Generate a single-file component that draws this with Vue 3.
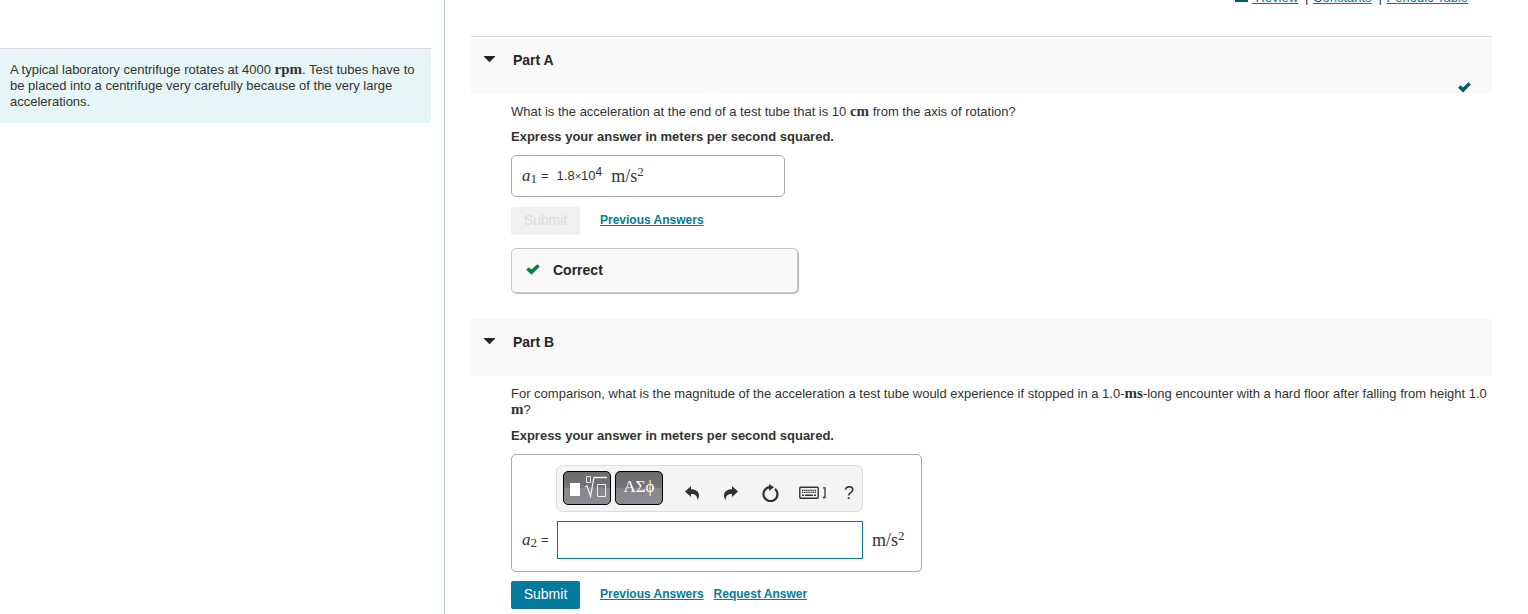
<template>
  <div class="page">
    <aside class="problem-pane">
      <p class="problem-text">
        A typical laboratory centrifuge rotates at 4000 <span class="unit">rpm</span>. Test tubes have to
        be placed into a centrifuge very carefully because of the very large accelerations.
      </p>
    </aside>

    <main class="parts-pane">
      <nav class="resources">
        <a href="#review" class="review">
          <svg width="13" height="12" viewBox="0 0 13 12"><path d="M0 1h6v8H0zM7 1h6v8H7zM0 9h13v3H0z" /></svg><span>&nbsp;Review</span>
        </a>
        <span class="divider">|</span>
        <a href="#constants">Constants</a>
        <span class="divider">|</span>
        <a href="#periodic-table">Periodic Table</a>
      </nav>

      <section class="part">
        <header class="part-header first">
          <button type="button" class="toggle" :aria-expanded="openA" @click="openA = !openA">
            <svg class="caret" width="11" height="6" viewBox="0 0 11 6"><path d="M0 0h11v.8L6 5.700q-.5.400-1 0L0 .8z" /></svg>
            Part A
          </button>
          <svg class="done" width="13" height="11" viewBox="0 0 13 11"><path d="M.2 5.800 2.600 3.300 5 5.600 10.500.2l2.300 2.300L5 10.500z" /></svg>
        </header>
        <div v-if="openA" class="part-body">
          <p class="question">
            What is the acceleration at the end of a test tube that is 10 <span class="unit">cm</span> from the
            axis of rotation?
          </p>
          <p class="instruction">Express your answer in meters per second squared.</p>
          <div class="answer-box">
            <span class="math variable"><i>a</i><sub>1</sub></span>
            <span class="equals">=</span>
            <span class="value">1.8<small>×</small>10<sup>4</sup></span>
            <span class="math">m/s<sup>2</sup></span>
          </div>
          <div class="actions">
            <button type="button" class="submit" disabled>Submit</button>
            <a href="#previous-a">Previous Answers</a>
          </div>
          <div class="feedback">
            <svg width="14" height="11" viewBox="0 0 14 11"><path d="M.2 5.800 2.800 3.200 5.400 5.600 11.300.2l2.500 2.300L5.400 10.700z" /></svg>
            Correct
          </div>
        </div>
      </section>

      <section class="part">
        <header class="part-header">
          <button type="button" class="toggle" :aria-expanded="openB" @click="openB = !openB">
            <svg class="caret" width="11" height="6" viewBox="0 0 11 6"><path d="M0 0h11v.8L6 5.700q-.5.400-1 0L0 .8z" /></svg>
            Part B
          </button>
        </header>
        <div v-if="openB" class="part-body">
          <p class="question">
            For comparison, what is the magnitude of the acceleration a test tube would experience if stopped in
            a 1.0-<span class="unit">ms</span>-long encounter with a hard floor after falling from height 1.0
            <span class="unit">m</span>?
          </p>
          <p class="instruction">Express your answer in meters per second squared.</p>
          <div class="editor">
            <div class="toolbar">
              <button type="button" class="palette" aria-label="Templates">
                <svg width="40" height="23" viewBox="0 0 40 23">
                  <path fill="#fff" d="M3 8h10v13H3z" />
                  <g fill="none" stroke="#eee">
                    <path d="M19.500 1.500h4v6h-4z" />
                    <path d="M30.500 9.500h8v12h-8z" />
                    <path d="m18 12 2-1 3.500 10L27 2.500h13" stroke-width="1.300" />
                  </g>
                </svg>
              </button>
              <button type="button" class="palette">ΑΣϕ</button>
              <button type="button" class="tool undo" aria-label="Undo">
                <svg width="14" height="14" viewBox="0 0 14 14"><path d="M0 5.500 6 0v3.200c5 0 8 2.300 8 6.300 0 1.800-.6 3.200-1.700 4.500C12.300 9.900 10.500 8 6 8v3z" /></svg>
              </button>
              <button type="button" class="tool" aria-label="Redo">
                <svg width="14" height="14" viewBox="0 0 14 14"><path d="M14 5.500 8 0v3.200c-5 0-8 2.300-8 6.300 0 1.800.6 3.200 1.700 4.500C1.700 9.900 3.500 8 8 8v3z" /></svg>
              </button>
              <button type="button" class="tool" aria-label="Reset">
                <svg width="18" height="18" viewBox="0 0 18 18">
                  <path d="M14 4.800A7 7 0 1 1 8.500 3.200" fill="none" stroke="#333" stroke-width="2.200" />
                  <path d="M8 0l5 3.300L8 7z" />
                </svg>
              </button>
              <button type="button" class="tool keyboard" aria-label="Keyboard shortcuts">
                <svg width="28" height="13" viewBox="0 0 28 13">
                  <rect x=".8" y="1.300" width="18.400" height="10.900" rx="1" fill="none" stroke="#333" stroke-width="1.400" />
                  <path d="M3 4.300h14M3 6.300h14" stroke="#333" stroke-width="1.300" stroke-dasharray="1.400 .7" />
                  <path d="M3 9.200h2M6 9.200h8M15 9.200h2" stroke="#333" stroke-width="1.500" />
                  <path d="M24 1.800h2v9.700h-2" fill="none" stroke="#333" stroke-width="1.300" />
                </svg>
              </button>
              <button type="button" class="tool help" aria-label="Help">?</button>
            </div>
            <label for="answer-b" class="entry-label">
              <span class="math variable"><i>a</i><sub>2</sub></span>
              <span class="equals">=</span>
            </label>
            <input id="answer-b" v-model="answer" type="text" class="entry" autocomplete="off" />
            <span class="math entry-unit">m/s<sup>2</sup></span>
          </div>
          <div class="actions last">
            <button type="button" class="submit">Submit</button>
            <a href="#previous-b">Previous Answers</a>
            <a href="#request-b">Request Answer</a>
          </div>
        </div>
      </section>
    </main>
  </div>
</template>

<script setup>
import { ref } from 'vue'

const openA = ref(true)
const openB = ref(true)
const answer = ref('')
</script>

<style>
body {
  margin: 0;
  background: #fff;
}
</style>

<style scoped>
.page {
  display: flex;
  min-height: 100vh;
  overflow: hidden;
  color: #333;
  font: 13px/16px "Liberation Sans", Arial, sans-serif;
}

p {
  margin: 0;
}

a {
  color: #047a9c;
}

button {
  font-family: inherit;
  cursor: pointer;
}

.problem-pane {
  flex: 0 0 29%;
  box-sizing: border-box;
  min-width: 445px;
  padding: 48px 13px 0 0;
  border-right: 1px solid #b8c7d9;
}

.problem-text {
  padding: 13px 10px;
  border-top: 1px solid #ddd;
  background: #e6f6f7;
}

.parts-pane {
  flex: 1;
  min-width: 0;
  padding: 0 36px 0 26px;
}

.unit {
  font: bold 15px/14px "Liberation Serif", "Times New Roman", serif;
}

/* The row sits partly above the top edge, as when the pane is scrolled */
.resources {
  display: flex;
  justify-content: flex-end;
  gap: 7px;
  margin-top: -10px;
  padding: 0 24px 30px 0;
}

.review {
  display: flex;
  text-decoration: none;
}

.review span {
  text-decoration: underline;
}

.review svg {
  margin-right: 4px;
  fill: #005a70;
}

.divider {
  width: 1px;
}

.part-header {
  display: flex;
  justify-content: space-between;
  align-items: flex-start;
  box-sizing: border-box;
  height: 57px;
  background: #f9f9f9;
}

.part-header.first {
  border-top: 1px solid #ddd;
}

.toggle {
  display: flex;
  align-items: center;
  gap: 18px;
  padding: 15px 13px;
  border: 0;
  background: none;
  color: #252525;
  font-size: 14px;
  font-weight: bold;
  line-height: 16px;
}

.caret {
  margin-bottom: 2px;
  fill: #252525;
}

.done {
  align-self: flex-end;
  margin-right: 21px;
  fill: #005a70;
}

.part-body {
  padding: 10px 0 0 40px;
}

.part-header.first + .part-body {
  padding-top: 11px;
}

.instruction {
  margin: 9px 0 10px;
  font-weight: bold;
}

.part-header:not(.first) + .part-body .instruction {
  margin-top: 10px;
}

.math {
  font: 18px/18px "Liberation Serif", "Times New Roman", serif;
}

.variable {
  font-size: 17px;
}

.math sub,
.math sup {
  font-size: 13px;
  line-height: 0;
}

.math sub {
  vertical-align: -2px;
}

.math sup {
  vertical-align: 6px;
}

.answer-box {
  display: flex;
  align-items: center;
  box-sizing: border-box;
  width: 274px;
  height: 42px;
  padding: 0 10px;
  border: 1px solid #a9a9a9;
  border-radius: 5px;
}

.equals {
  margin-left: 4px;
}

.value {
  margin: 0 9px 0 8px;
}

.value small {
  font-size: 11px;
}

.value sup {
  font-size: 12px;
  line-height: 0;
  vertical-align: 4px;
}

.actions {
  display: flex;
  gap: 10px;
  margin: 10px 0 13px;
  font-size: 12px;
  font-weight: bold;
  line-height: 26px;
}

.actions.last {
  margin: 9px 0 5px;
}

.submit {
  width: 69px;
  height: 28px;
  margin-right: 10px;
  padding: 0 0 2px;
  border: 0;
  border-radius: 2px;
  background: #047a9c;
  color: #fff;
  font-size: 14px;
}

.submit:disabled {
  background: #f0f0f0;
  color: #ddd;
  cursor: default;
}

.feedback {
  display: flex;
  align-items: center;
  gap: 13px;
  box-sizing: border-box;
  width: 287px;
  height: 45px;
  margin-bottom: 26px;
  padding: 0 14px 2px;
  border: 1px solid #c7c7c7;
  border-radius: 5px;
  background: #f9f9f9;
  box-shadow: 1px 1px 1px #bbb;
  color: #252525;
  font-size: 14px;
  font-weight: bold;
}

.feedback svg {
  fill: #008638;
}

.editor {
  display: grid;
  grid-template-columns: 34px 307px auto;
  align-items: center;
  row-gap: 9px;
  box-sizing: border-box;
  width: 411px;
  padding: 10px 10px 12px;
  border: 1px solid #a9a9a9;
  border-radius: 5px;
}

.toolbar {
  grid-column: 2;
  display: flex;
  align-items: center;
  box-sizing: border-box;
  height: 47px;
  padding: 0 0 0 6px;
  border: 1px solid #ddd;
  border-radius: 6px;
  background: #f4f4f4;
}

.palette {
  flex: none;
  box-sizing: border-box;
  width: 48px;
  height: 34px;
  margin: 0 4px 2px 0;
  padding: 0 0 2px;
  border: 1px solid #000;
  border-radius: 5px;
  background: linear-gradient(#6b6b6e, #737376 48%, #85858b 50%, #8b8b92);
  color: #fff;
  font: 17px/20px "Liberation Serif", "Times New Roman", serif;
}

.palette svg {
  display: block;
  margin: 0 auto;
}

.tool {
  display: flex;
  flex: none;
  justify-content: center;
  width: 39px;
  margin-top: 8px;
  padding: 0;
  border: 0;
  background: none;
  color: #333;
  fill: #333;
}

.undo {
  margin-left: 5px;
}

.keyboard {
  width: 48px;
}

.help {
  width: 24px;
  font-size: 18px;
  line-height: 18px;
}

.entry-label {
  grid-column: 1;
  display: flex;
  align-items: center;
}

.entry {
  box-sizing: border-box;
  height: 38px;
  margin-left: 1px;
  padding: 0 8px;
  border: 1px solid #047a9c;
  outline: 0;
  font: inherit;
}

.entry-unit {
  margin-left: 9px;
}
</style>
